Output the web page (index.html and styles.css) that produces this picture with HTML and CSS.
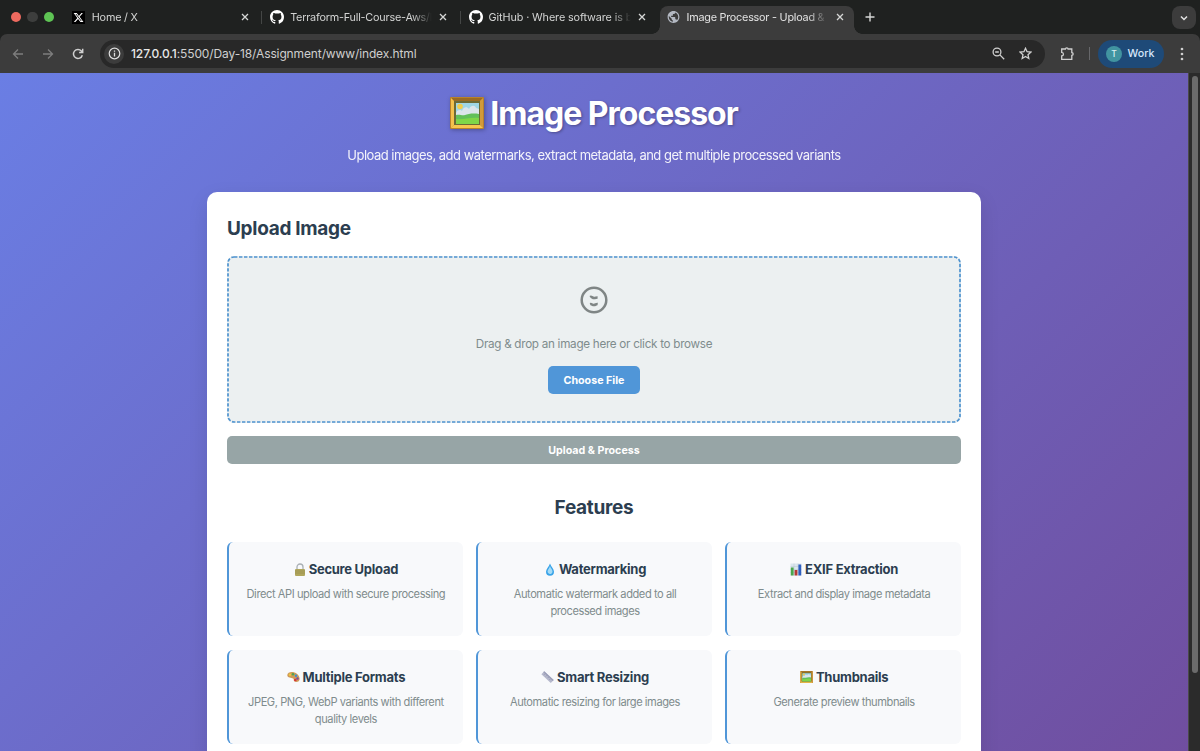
FILE: index.html
```html
<!DOCTYPE html>
<html lang="en">
<head>
    <meta charset="UTF-8">
    <meta name="viewport" content="width=device-width, initial-scale=1.0">
    <title>Image Processor - Upload &amp; Process</title>
    <link rel="stylesheet" href="styles.css">
</head>
<body>
    <!-- Shared icons -->
    <svg class="sprite" width="0" height="0">
        <symbol id="github" viewBox="0 0 16 16"><path d="M8 0C3.58 0 0 3.58 0 8c0 3.54 2.29 6.53 5.47 7.59.4.07.55-.17.55-.38 0-.19-.01-.82-.01-1.49-2.01.37-2.53-.49-2.69-.94-.09-.23-.48-.94-.82-1.13-.28-.15-.68-.52-.01-.53.63-.01 1.08.58 1.23.82.72 1.21 1.87.87 2.33.66.07-.52.28-.87.51-1.07-1.78-.2-3.64-.89-3.64-3.95 0-.87.31-1.59.82-2.15-.08-.2-.36-1.02.08-2.12 0 0 .67-.21 2.2.82.64-.18 1.32-.27 2-.27s1.36.09 2 .27c1.53-1.04 2.2-.82 2.2-.82.44 1.1.16 1.92.08 2.12.51.56.82 1.27.82 2.15 0 3.07-1.87 3.75-3.65 3.95.29.25.54.73.54 1.48 0 1.07-.01 1.93-.01 2.2 0 .21.15.46.55.38A8.01 8.01 0 0 0 16 8c0-4.42-3.58-8-8-8z"/></symbol>
        <symbol id="close" viewBox="0 0 10 10"><path d="M2 2l6 6M8 2L2 8" stroke="#d6d7d6" stroke-width="1.3"/></symbol>
        <symbol id="picture" viewBox="0 0 34 32">
            <rect width="34" height="32" rx="1" fill="#b9822a"/>
            <path d="M1 1h32l-3 3H4z" fill="#9a6a22"/>
            <path d="M1 1l3 3v24l-3 3z" fill="#f3c04d"/>
            <path d="M33 1l-3 3v24l3 3z" fill="#d29a3a"/>
            <path d="M1 31l3-3h26l3 3z" fill="#f6c64e"/>
            <rect x="4" y="4" width="26" height="24" fill="#6d6a35"/>
            <rect x="6" y="6" width="23" height="21" fill="#9fd6e6"/>
            <circle cx="10" cy="9.500" r="2.800" fill="#f2cd4c"/>
            <path d="M6 16c2-4 5-3 6-2 1-4 5-5 7-2 2-4 6-4 7-1l3 1v7H6z" fill="#dce5ec"/>
            <path d="M6 18c4-1 6 1 9 0s8-2 14-1v10H6z" fill="#62c05a"/>
            <path d="M6 22c7 1 14-2 23-1v6H6z" fill="#7fd648"/>
        </symbol>
    </svg>

    <header class="browser">
        <div class="tab-strip">
            <div class="window-dots">
                <span class="dot red"></span>
                <span class="dot gray"></span>
                <span class="dot green"></span>
            </div>
            <div class="tab">
                <svg class="favicon x-icon" viewBox="0 0 24 24"><rect width="24" height="24" fill="#000"/><path transform="translate(2 2) scale(.84)" d="M18.244 2.250h3.308l-7.227 8.260 8.502 11.240H16.170l-5.214-6.817L4.990 21.750H1.680l7.730-8.835L1.254 2.250H8.080l4.713 6.231zm-1.161 17.520h1.833L7.084 4.126H5.117z" fill="#fff"/></svg>
                <span class="tab-title">Home / X</span>
                <svg class="close"><use href="#close"/></svg>
            </div>
            <div class="tab divided">
                <svg class="favicon" fill="#fff"><use href="#github"/></svg>
                <span class="tab-title">Terraform-Full-Course-Aws/le</span>
                <svg class="close"><use href="#close"/></svg>
            </div>
            <div class="tab divided">
                <svg class="favicon" fill="#fff"><use href="#github"/></svg>
                <span class="tab-title hub">GitHub · Where software is bu</span>
                <svg class="close"><use href="#close"/></svg>
            </div>
            <div class="tab active">
                <svg class="favicon globe" viewBox="1 1 22 22" fill="#b3b8c2"><path d="M12 2C6.480 2 2 6.480 2 12s4.480 10 10 10 10-4.480 10-10S17.520 2 12 2zm-1 17.930c-3.950-.49-7-3.850-7-7.930 0-.62.08-1.210.21-1.790L9 15v1c0 1.100.9 2 2 2v1.930zm6.900-2.540c-.26-.81-1-1.390-1.900-1.390h-1v-3c0-.55-.45-1-1-1H8v-2h2c.55 0 1-.45 1-1V7h2c1.100 0 2-.9 2-2v-.41c2.930 1.190 5 4.060 5 7.410 0 2.080-.8 3.970-2.100 5.390z"/></svg>
                <span class="tab-title">Image Processor - Upload &amp; P</span>
                <svg class="close"><use href="#close"/></svg>
            </div>
            <svg class="new-tab" viewBox="0 0 12 12"><path d="M6 1.500v9M1.500 6h9" stroke="#d6d7d6" stroke-width="1.400"/></svg>
            <div class="tab-search">
                <svg viewBox="0 0 10 10" width="10" height="10"><path d="M2 3.500l3 3 3-3" fill="none" stroke="#e3e3e3" stroke-width="1.500"/></svg>
            </div>
        </div>

        <div class="toolbar">
            <div class="nav">
                <svg viewBox="0 0 12 12" stroke="#7d7d7d"><path d="M11 6H1.800M6 1.500L1.500 6 6 10.500"/></svg>
                <svg viewBox="0 0 12 12" stroke="#7d7d7d"><path d="M1 6h9.200M6 1.500L10.500 6 6 10.500"/></svg>
                <svg viewBox="0 0 12 12" stroke="#d0d0d0"><path d="M10.300 7.200A4.500 4.500 0 1 1 9.400 3L10.600 4.300M10.700.8v3.600H7.100" stroke-width="1.500"/></svg>
            </div>
            <div class="address-bar">
                <span class="site-info">
                    <svg viewBox="0 0 14 14" width="13" height="13"><circle cx="7" cy="7" r="5.700" fill="none" stroke="#dedede" stroke-width="1.300"/><path d="M7 6.200v4M7 3.700v1.400" stroke="#dedede" stroke-width="1.400"/></svg>
                </span>
                <span class="url"><b>127.0.0.1</b>:5500/Day-18/Assignment/www/index.html</span>
                <svg class="zoom-icon" viewBox="0 0 13 13"><circle cx="5" cy="5" r="3.900"/><path d="M3.200 5h3.600M7.900 7.900l4.300 4.300"/></svg>
                <svg class="star-icon" viewBox="0 0 13 13"><path d="M6.500 1.300l1.550 3.450 3.750.4L9 7.700l.8 3.800-3.300-1.950L3.200 11.500 4 7.700 1.200 5.150l3.750-.4z"/></svg>
            </div>
            <svg class="puzzle" viewBox="0 0 15 15"><path d="M1.700 3h3.700C5.500 1.500 8 1.500 8.100 3h3.700v3.600c1.800.1 1.800 2.700 0 2.800v3.900H1.700V9.900c2.300-.1 2.300-3.400 0-3.500z"/></svg>
            <span class="toolbar-line"></span>
            <div class="profile"><span class="avatar">T</span>Work</div>
            <svg class="menu-icon" viewBox="0 0 4 14" fill="#d0d0d0"><circle cx="2" cy="2" r="1.350"/><circle cx="2" cy="7" r="1.350"/><circle cx="2" cy="12" r="1.350"/></svg>
        </div>
    </header>

    <div class="viewport">
        <div class="page">
            <div class="header">
                <h1><svg class="title-icon"><use href="#picture"/></svg><span>Image Processor</span></h1>
                <p>Upload images, add watermarks, extract metadata, and get multiple processed variants</p>
            </div>

            <main class="card">
                <h2>Upload Image</h2>
                <div class="upload-area">
                    <svg class="dashes" width="734" height="167"><rect x="1" y="1" width="732" height="165" rx="6"/></svg>
                    <svg class="upload-icon" viewBox="0 0 28 28"><circle cx="14" cy="14" r="12.300"/><path d="M10.100 11c1.500-.9 2.400 1.200 4 1.100s2-.5 3.500-.5M10.100 18.200c1.500-.5 2.500 1 4 .8s2-1.100 3.600-.9"/></svg>
                    <p>Drag &amp; drop an image here or click to browse</p>
                    <button class="choose-btn">Choose File</button>
                </div>
                <button class="upload-btn">Upload &amp; Process</button>

                <h2 class="features-title">Features</h2>
                <div class="features">
                    <div class="feature">
                        <h3>
                            <svg class="emoji" viewBox="0 0 12 13"><path d="M3 7V4a3 3 0 0 1 6 0v3" fill="none" stroke="#a9b0b4" stroke-width="1.300"/><rect x="1" y="6" width="10" height="7" rx="1" fill="#b0a65c"/><path d="M1 8h10M1 10h10" stroke="#948c4b" stroke-width=".6"/></svg>
                            <span>Secure Upload</span>
                        </h3>
                        <p>Direct API upload with secure processing</p>
                    </div>
                    <div class="feature">
                        <h3>
                            <svg class="emoji" viewBox="0 0 12 13"><path d="M6 .4C7 3.500 10 6 10 8.800a4 4 0 0 1-8 0C2 6 5 3.500 6 .4z" fill="#38a3e8"/><path d="M6 3c.5 2 2.500 3.500 2.500 5.500S7 11 6 11 3.500 10 3.500 8.500 5.500 5 6 3z" fill="#a5dbf6"/></svg>
                            <span>Watermarking</span>
                        </h3>
                        <p>Automatic watermark added to all<br>processed images</p>
                    </div>
                    <div class="feature">
                        <h3>
                            <svg class="emoji" viewBox="0 0 12 13"><rect x=".5" y=".5" width="11" height="12" fill="#dbe6ee"/><path d="M.5 3.500h11M.5 6.500h11M.5 9.500h11M4 .5v12M8 .5v12" stroke="#b9c7d2" stroke-width=".5"/><rect x=".8" y="4.500" width="2.800" height="8" fill="#4aa64c"/><rect x="4.600" y="7" width="2.800" height="5.500" fill="#b43a35"/><rect x="8.400" y="1.500" width="2.800" height="11" fill="#2f5fc0"/></svg>
                            <span>EXIF Extraction</span>
                        </h3>
                        <p>Extract and display image metadata</p>
                    </div>
                    <div class="feature">
                        <h3>
                            <svg class="emoji wide" viewBox="0 0 13 12"><path d="M.3 4C.5 1.500 4 .3 7.500 1.500S13 6 12.600 8.500 9 11.500 7.500 10.500s0-2.300-1.500-3S.1 7 .3 4z" fill="#cf9a58"/><circle cx="3" cy="3.700" r="1.200" fill="#efc83c"/><circle cx="6" cy="3.300" r="1.200" fill="#4da552"/><circle cx="9" cy="4.800" r="1.200" fill="#3f8fd0"/><circle cx="10.500" cy="7.500" r="1.200" fill="#7c4a9e"/><circle cx="8.300" cy="9" r="1.300" fill="#d5343c"/></svg>
                            <span>Multiple Formats</span>
                        </h3>
                        <p>JPEG, PNG, WebP variants with different<br>quality levels</p>
                    </div>
                    <div class="feature">
                        <h3>
                            <svg class="emoji wide" viewBox="0 0 13 12"><path d="M3.200.3l9.500 8.700-2.900 3L.4 3.200z" fill="#b5b8cc"/><path d="M3.200.3l9.500 8.700-.9.900L2.300 1.200z" fill="#9b9eb8"/><path d="M4 2.800l-1 1M5.800 4.400l-1 1M7.600 6.100l-1 1M9.400 7.800l-1 1" stroke="#85889f" stroke-width=".6"/></svg>
                            <span>Smart Resizing</span>
                        </h3>
                        <p>Automatic resizing for large images</p>
                    </div>
                    <div class="feature">
                        <h3>
                            <svg class="emoji wide"><use href="#picture"/></svg>
                            <span>Thumbnails</span>
                        </h3>
                        <p>Generate preview thumbnails</p>
                    </div>
                </div>
            </main>
        </div>
        <div class="scrollbar"><div class="thumb"></div></div>
    </div>
</body>
</html>
```
FILE: styles.css
```css
* {
    box-sizing: border-box;
    margin: 0;
    padding: 0;
}

body {
    width: 1200px;
    height: 751px;
    display: flex;
    flex-direction: column;
    overflow: hidden;
    font-family: Inter, "Liberation Sans", sans-serif;
    background: #1f2120;
}

svg {
    display: block;
    flex: none;
}

.sprite {
    position: absolute;
}

/* Browser tabs */
.browser {
    height: 73px;
    flex: none;
}

.tab-strip {
    height: 34px;
    display: flex;
    align-items: flex-end;
}

.window-dots {
    width: 62.8px;
    height: 34px;
    padding-left: 10.5px;
    display: flex;
    align-items: center;
    gap: 6.3px;
    flex: none;
}

.dot {
    width: 10.4px;
    height: 10.4px;
    border-radius: 50%;
}

.red { background: #ee6a5f; }
.gray { background: #3d3e3d; }
.green { background: #5ec454; }

.tab {
    width: 198.4px;
    height: 34px;
    flex: none;
    display: flex;
    align-items: center;
    padding-left: 8px;
    border-left: 1px solid transparent;
    color: #d3d4d3;
    font-size: 10.8px;
    letter-spacing: -0.2px;
}

.tab.divided {
    border-image: linear-gradient(transparent 11px, #444645 11px, #444645 24px, transparent 24px) 1;
    border-width: 0 0 0 1px;
}

.tab.active {
    position: relative;
    width: 193.5px;
    height: 28px;
    margin-left: 2.5px;
    padding: 0 0 6px 6px;
    border-radius: 8px 8px 0 0;
    background: #3c3c3c;
    color: #e3e3e3;
}

.tab.active::before,
.tab.active::after {
    content: "";
    position: absolute;
    bottom: 0;
    width: 8px;
    height: 8px;
}

.tab.active::before {
    left: -9px;
    background: radial-gradient(circle at 0 0, transparent 7.5px, #3c3c3c 8px);
}

.tab.active::after {
    right: -8px;
    background: radial-gradient(circle at 100% 0, transparent 7.5px, #3c3c3c 8px);
}

.favicon {
    width: 14px;
    height: 14px;
    margin-right: 6px;
}

.x-icon {
    width: 13px;
    height: 13px;
    margin-right: 7px;
}

.globe {
    width: 13px;
}

.tab-title {
    width: 142px;
    margin-right: 6px;
    white-space: nowrap;
    mask-image: linear-gradient(90deg, #000 122px, transparent 142px);
}

.tab-title.hub {
    letter-spacing: -0.1px;
}

.active .tab-title {
    margin-right: 6.5px;
    letter-spacing: -0.22px;
}

.close {
    width: 10px;
    height: 10px;
}

.new-tab {
    width: 12px;
    height: 12px;
    margin: 0 0 11px 10px;
}

.tab-search {
    width: 24px;
    height: 23px;
    margin: 0 4px 5px auto;
    border-radius: 8px;
    background: #3c3c3c;
    display: flex;
    align-items: center;
    justify-content: center;
}

/* Toolbar */
.toolbar {
    height: 39px;
    display: flex;
    align-items: center;
    padding-left: 12px;
    background: #3c3c3c;
    border-radius: 7px 7px 0 0;
}

.nav {
    width: 88px;
    display: flex;
    gap: 18px;
}

.nav svg {
    width: 12px;
    height: 12px;
    fill: none;
    stroke-width: 1.3;
}

.address-bar {
    width: 945px;
    height: 28px;
    padding: 0 13px 0 4px;
    display: flex;
    align-items: center;
    border-radius: 14px;
    background: #282828;
}

.site-info {
    width: 20px;
    height: 20px;
    margin-right: 7px;
    border-radius: 50%;
    background: #3c3c3c;
    display: flex;
    align-items: center;
    justify-content: center;
}

.url {
    flex: 1;
    font-size: 12px;
    letter-spacing: -0.12px;
    color: #cfcfcf;
}

.url b {
    font-weight: 500;
    color: #e8e8e8;
}

.zoom-icon,
.star-icon,
.puzzle {
    width: 13px;
    height: 13px;
    fill: none;
    stroke: #d0d0d0;
    stroke-width: 1.3;
}

.zoom-icon {
    margin-right: 14px;
}

.puzzle {
    width: 15px;
    height: 15px;
    margin-left: 15px;
}

.toolbar-line {
    width: 1px;
    height: 13px;
    margin: 0 8px 0 14px;
    background: #66676a;
}

.profile {
    width: 66px;
    height: 28px;
    padding-left: 8px;
    display: flex;
    align-items: center;
    gap: 5.5px;
    border-radius: 14px;
    background: #1e4a78;
    color: #d6e6fb;
    font-size: 10.7px;
    font-weight: 500;
}

.avatar {
    width: 16px;
    height: 16px;
    border-radius: 50%;
    background: #4194a0;
    color: #d9f0f2;
    font-size: 8.5px;
    line-height: 16px;
    text-align: center;
}

.menu-icon {
    width: 4px;
    height: 14px;
    margin-left: 16px;
}

/* Page */
.viewport {
    height: 678px;
    display: flex;
    overflow: hidden;
}

.page {
    width: 1188px;
    height: 678px;
    padding-top: 20px;
    overflow: hidden;
    background: linear-gradient(135deg, #6a7ee4 0%, #704e9f 100%);
}

.header {
    height: 99px;
    color: white;
    text-align: center;
}

h1 {
    height: 40px;
    display: flex;
    align-items: center;
    justify-content: center;
    gap: 6px;
    font-size: 32px;
    line-height: 40px;
    letter-spacing: -1.02px;
    text-shadow: 1.3px 1.3px 2.7px rgba(0, 0, 0, 0.3);
}

h1 span {
    padding-top: 1px;
}

.title-icon {
    width: 34px;
    height: 32px;
    filter: drop-shadow(1px 1px 2px rgba(0, 0, 0, 0.3));
}

.header p {
    margin-top: 12px;
    font-size: 13px;
    line-height: 20px;
    letter-spacing: -0.515px;
    opacity: 0.92;
}

.card {
    width: 774px;
    height: 572px;
    margin: 0 auto;
    padding: 20px;
    border-radius: 10px;
    background: white;
    box-shadow: 0 7px 20px rgba(0, 0, 0, 0.1);
}

h2 {
    height: 44px;
    padding-top: 1px;
    font-size: 19px;
    line-height: 32px;
    letter-spacing: -0.3px;
    color: #2c3e50;
}

.upload-area {
    position: relative;
    height: 167px;
    padding-top: 30px;
    display: flex;
    flex-direction: column;
    align-items: center;
    border-radius: 7px;
    background: #ecf0f1;
}

.dashes {
    position: absolute;
    top: 0;
    left: 0;
    fill: none;
    stroke: #4e93cf;
    stroke-width: 1.7;
    stroke-dasharray: 3.4 1.6;
}

.upload-icon {
    width: 28px;
    height: 28px;
    fill: none;
    stroke: #7f8585;
    stroke-width: 2.5;
}

.upload-area p {
    margin: 21px 0 13px;
    color: #7f8c8d;
    font-size: 11.7px;
    line-height: 18px;
    letter-spacing: -0.29px;
}

button {
    border: none;
    color: white;
    font: bold 10.7px Inter, "Liberation Sans", sans-serif;
}

.choose-btn {
    width: 92px;
    height: 28px;
    border-radius: 5px;
    background: #5096d8;
}

.upload-btn {
    width: 100%;
    height: 28px;
    margin-top: 13px;
    display: block;
    border-radius: 5px;
    background: #97a5a6;
}

.features-title {
    height: 51px;
    margin-top: 27px;
    text-align: center;
}

.features {
    display: grid;
    grid-template-columns: repeat(3, 1fr);
    gap: 14px 13.3px;
}

.feature {
    height: 94px;
    padding-top: 17px;
    border-left: 2.67px solid #5096d8;
    border-radius: 6px;
    background: #f8f9fb;
    text-align: center;
}

h3 {
    display: flex;
    align-items: center;
    justify-content: center;
    gap: 3px;
    color: #2c3e50;
    font-size: 13px;
    line-height: 20px;
    letter-spacing: -0.26px;
}

.emoji {
    width: 12px;
    height: 13px;
}

.emoji.wide {
    width: 13px;
    height: 12px;
}

.feature p {
    margin-top: 7px;
    color: #7f8c8d;
    font-size: 11.1px;
    line-height: 17.1px;
    letter-spacing: -0.43px;
    white-space: nowrap;
}

.scrollbar {
    width: 12px;
    padding: 3px 2px 0 3px;
    border-left: 1px solid #4a4a4a;
    background: #2b2b2b;
}

.thumb {
    height: 597px;
    border-radius: 4px;
    background: #6b6b6b;
}
```
